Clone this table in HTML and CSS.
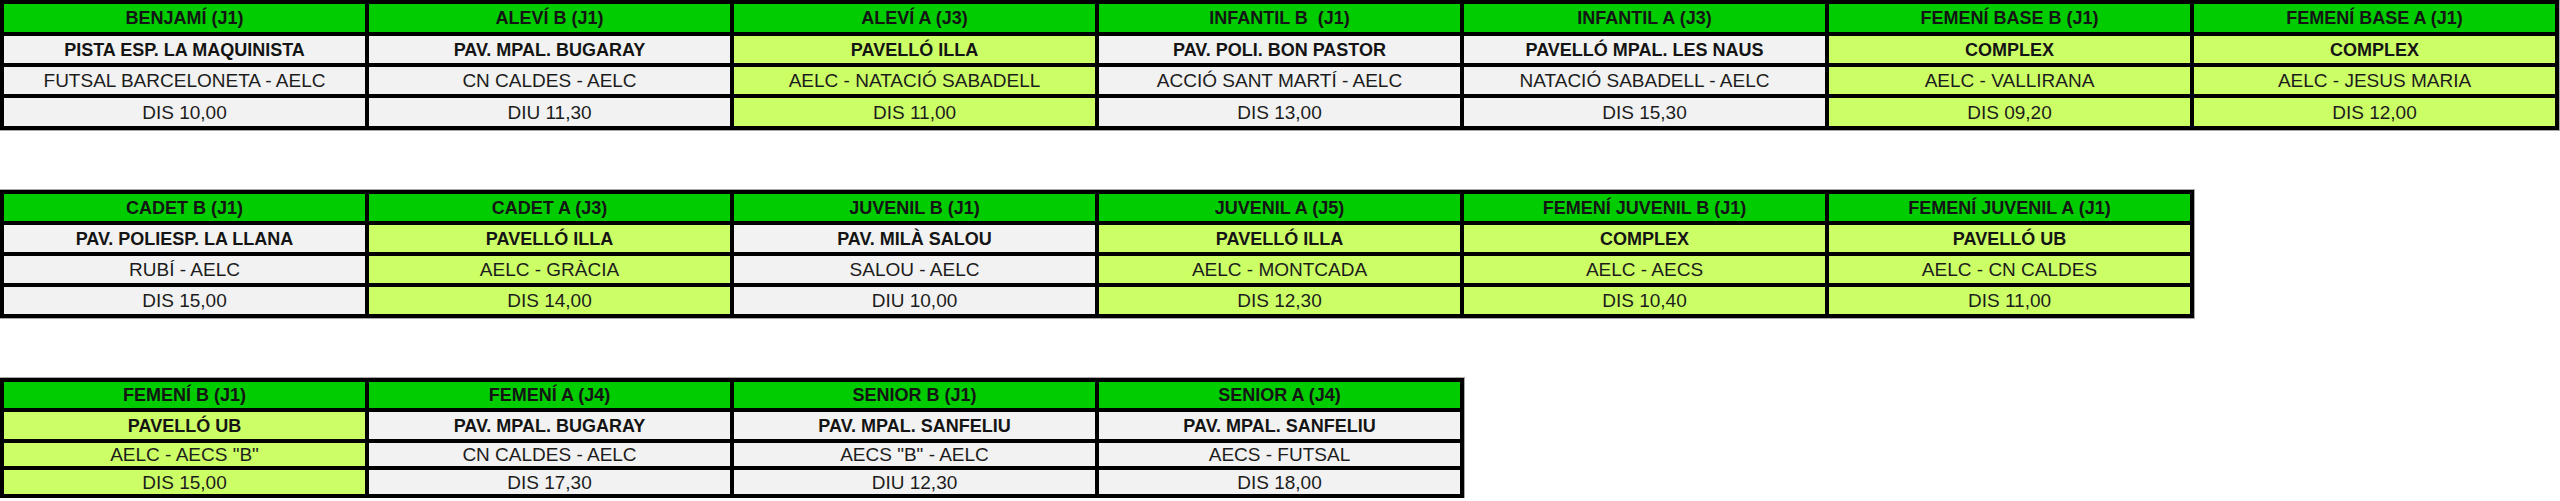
FILE: index.html
```html
<!DOCTYPE html>
<html lang="ca">
<head>
<meta charset="utf-8">
<title>Partits</title>
<link rel="stylesheet" href="styles.css">
</head>
<body>
<div class="page">
  <section class="board board-1">
    <div class="match"><div class="cell head">BENJAMÍ (J1)</div><div class="cell venue">PISTA ESP. LA MAQUINISTA</div><div class="cell">FUTSAL BARCELONETA - AELC</div><div class="cell">DIS 10,00</div></div>
    <div class="match"><div class="cell head">ALEVÍ B (J1)</div><div class="cell venue">PAV. MPAL. BUGARAY</div><div class="cell">CN CALDES - AELC</div><div class="cell">DIU 11,30</div></div>
    <div class="match home"><div class="cell head">ALEVÍ A (J3)</div><div class="cell venue">PAVELLÓ ILLA</div><div class="cell">AELC - NATACIÓ SABADELL</div><div class="cell">DIS 11,00</div></div>
    <div class="match"><div class="cell head">INFANTIL B&nbsp; (J1)</div><div class="cell venue">PAV. POLI. BON PASTOR</div><div class="cell">ACCIÓ SANT MARTÍ - AELC</div><div class="cell">DIS 13,00</div></div>
    <div class="match"><div class="cell head">INFANTIL A (J3)</div><div class="cell venue">PAVELLÓ MPAL. LES NAUS</div><div class="cell">NATACIÓ SABADELL - AELC</div><div class="cell">DIS 15,30</div></div>
    <div class="match home"><div class="cell head">FEMENÍ BASE B (J1)</div><div class="cell venue">COMPLEX</div><div class="cell">AELC - VALLIRANA</div><div class="cell">DIS 09,20</div></div>
    <div class="match home"><div class="cell head">FEMENÍ BASE A (J1)</div><div class="cell venue">COMPLEX</div><div class="cell">AELC - JESUS MARIA</div><div class="cell">DIS 12,00</div></div>
  </section>
  <section class="board board-2">
    <div class="match"><div class="cell head">CADET B (J1)</div><div class="cell venue">PAV. POLIESP. LA LLANA</div><div class="cell">RUBÍ - AELC</div><div class="cell">DIS 15,00</div></div>
    <div class="match home"><div class="cell head">CADET A (J3)</div><div class="cell venue">PAVELLÓ ILLA</div><div class="cell">AELC - GRÀCIA</div><div class="cell">DIS 14,00</div></div>
    <div class="match"><div class="cell head">JUVENIL B (J1)</div><div class="cell venue">PAV. MILÀ SALOU</div><div class="cell">SALOU - AELC</div><div class="cell">DIU 10,00</div></div>
    <div class="match home"><div class="cell head">JUVENIL A (J5)</div><div class="cell venue">PAVELLÓ ILLA</div><div class="cell">AELC - MONTCADA</div><div class="cell">DIS 12,30</div></div>
    <div class="match home"><div class="cell head">FEMENÍ JUVENIL B (J1)</div><div class="cell venue">COMPLEX</div><div class="cell">AELC - AECS</div><div class="cell">DIS 10,40</div></div>
    <div class="match home"><div class="cell head">FEMENÍ JUVENIL A (J1)</div><div class="cell venue">PAVELLÓ UB</div><div class="cell">AELC - CN CALDES</div><div class="cell">DIS 11,00</div></div>
  </section>
  <section class="board board-3">
    <div class="match home"><div class="cell head">FEMENÍ B (J1)</div><div class="cell venue">PAVELLÓ UB</div><div class="cell">AELC - AECS "B"</div><div class="cell">DIS 15,00</div></div>
    <div class="match"><div class="cell head">FEMENÍ A (J4)</div><div class="cell venue">PAV. MPAL. BUGARAY</div><div class="cell">CN CALDES - AELC</div><div class="cell">DIS 17,30</div></div>
    <div class="match"><div class="cell head">SENIOR B (J1)</div><div class="cell venue">PAV. MPAL. SANFELIU</div><div class="cell">AECS "B" - AELC</div><div class="cell">DIU 12,30</div></div>
    <div class="match"><div class="cell head">SENIOR A (J4)</div><div class="cell venue">PAV. MPAL. SANFELIU</div><div class="cell">AECS - FUTSAL</div><div class="cell">DIS 18,00</div></div>
  </section>
</div>
</body>
</html>
```
FILE: styles.css
```css
html, body {
  margin: 0;
  padding: 0;
  background: #ffffff;
}
body {
  font-family: "Liberation Sans", Arial, sans-serif;
  font-size: 19px;
  color: #1c1c1c;
}
.page {
  display: flex;
  flex-direction: column;
  align-items: flex-start;
  gap: 60px;
}
.board {
  display: flex;
  gap: 4px;
  padding: 4px;
  background: #000;
  box-shadow: 0 0 0 1px #a8a8a8;
  --h1: 28px;
  --h2: 27px;
  --h3: 27px;
  --h4: 28px;
}
.board-2 {
  --h1: 27px;
  --h2: 27px;
  --h3: 27px;
  --h4: 27px;
}
.board-3 {
  --h1: 26px;
  --h2: 27px;
  --h3: 23px;
  --h4: 24px;
}
.match {
  width: 361px;
  display: flex;
  flex-direction: column;
  gap: 4px;
}
.cell {
  display: flex;
  align-items: center;
  justify-content: center;
  background: #f2f2f2;
  white-space: nowrap;
  line-height: 1;
}
.cell:nth-child(1) { height: var(--h1); }
.cell:nth-child(2) { height: var(--h2); }
.cell:nth-child(3) { height: var(--h3); }
.cell:nth-child(4) { height: var(--h4); }
.match.home .cell {
  background: #ccff66;
}
.match .cell.head {
  background: #00cc00;
  font-weight: bold;
  font-size: 18px;
  color: #141414;
}
.venue {
  font-weight: bold;
  font-size: 18px;
  color: #141414;
}
```
